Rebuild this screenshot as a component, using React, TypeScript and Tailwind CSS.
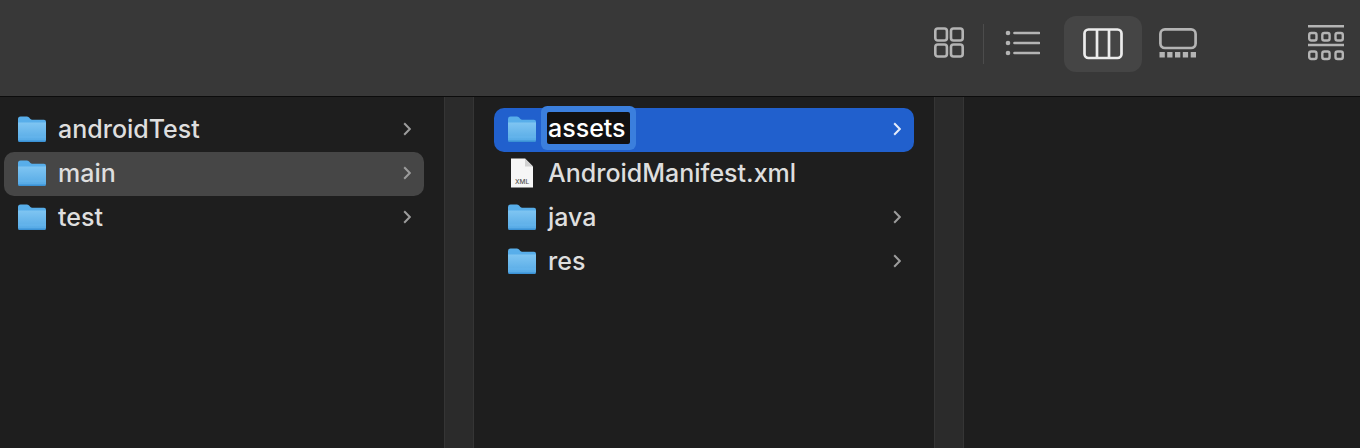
import React from 'react';

type Item = {
  name: string;
  kind: 'folder' | 'xml';
  state?: 'selected' | 'inactive' | 'rename';
};

const firstColumn: Item[] = [
  { name: 'androidTest', kind: 'folder' },
  { name: 'main', kind: 'folder', state: 'inactive' },
  { name: 'test', kind: 'folder' },
];

const secondColumn: Item[] = [
  { name: 'assets', kind: 'folder', state: 'rename' },
  { name: 'AndroidManifest.xml', kind: 'xml' },
  { name: 'java', kind: 'folder' },
  { name: 'res', kind: 'folder' },
];

const FolderIcon = ({ id }: { id: string }) => (
  <svg width="28" height="26" viewBox="0 0 28 26" className="mb-[2px] shrink-0">
    <defs>
      <linearGradient id={id} x1="0" y1="0" x2="0" y2="1">
        <stop offset="0" stopColor="#7fc5f2" />
        <stop offset="1" stopColor="#53a8e5" />
      </linearGradient>
    </defs>
    <path d="M0 3a2.5 2.5 0 0 1 2.5-2.5h6.2c1 0 1.7.4 2.4 1.1l1.3 1.4c.5.5 1 .7 1.7.7H26a2 2 0 0 1 2 2V10H0z" fill="#58aeea" />
    <path d="M0 6.5h28V24a2 2 0 0 1-2 2H2a2 2 0 0 1-2-2z" fill={`url(#${id})`} />
    <rect x="0" y="20.5" width="28" height="1" fill="#66b6ee" />
    <path d="M0 24.5h28V24a2 2 0 0 1-2 2H2a2 2 0 0 1-2-2z" fill="#3b92d5" />
  </svg>
);

const XmlIcon = () => (
  <svg width="28" height="30" viewBox="0 0 28 30" className="mb-[2px] shrink-0">
    <path d="M3 0.5H17L25 8.5V29.5H3z" fill="#f6f6f6" />
    <path d="M17 0.5V8.5H25z" fill="#d2d2d2" />
    <text x="14" y="26" textAnchor="middle" fontSize="6.5" fontWeight="500" fill="#555" fontFamily="Inter, sans-serif">
      XML
    </text>
  </svg>
);

const Chevron = ({ color }: { color: string }) => (
  <svg width="8" height="14" viewBox="0 0 8 14" fill="none" stroke={color} strokeWidth="2" className="mb-[2px] ml-auto shrink-0">
    <path d="M1.2 1.2 6.8 7 1.2 12.8" />
  </svg>
);

const Row = ({ item, id }: { item: Item; id: string }) => {
  const rowBg =
    item.state === 'rename'
      ? 'bg-[#2160cd]'
      : item.state === 'inactive'
        ? 'bg-[#464646]'
        : '';

  return (
    <div className={`flex h-[44px] w-[420px] items-center rounded-[10px] pl-[14px] pr-[13px] ${rowBg}`}>
      <div className="flex w-[28px] justify-center">
        {item.kind === 'folder' ? <FolderIcon id={id} /> : <XmlIcon />}
      </div>
      {item.state === 'rename' ? (
        <span className="mb-[4px] ml-[11px] flex h-[32px] w-[83px] items-center rounded-[2px] bg-[#111] pl-[1px] text-white ring-[6px] ring-[#3b7fdd]">
          {item.name}
        </span>
      ) : (
        <span className="mb-[1px] ml-[12px] text-[#dedede]">{item.name}</span>
      )}
      {item.kind === 'folder' && (
        <Chevron color={item.state === 'rename' ? '#e6ecfa' : '#9c9c9c'} />
      )}
    </div>
  );
};

const Gutter = () => (
  <div className="w-[30px] shrink-0 border-x border-[#353535] bg-[#2b2b2b]" />
);

export default function App() {
  return (
    <div className="flex h-[448px] w-[1360px] flex-col overflow-hidden bg-[#1e1e1e] font-['Inter','Liberation_Sans',sans-serif] text-[25px] font-[450] leading-none">
      {/* toolbar */}
      <header className="flex h-[97px] shrink-0 items-start border-b border-[#0c0c0c] bg-[#383838] pl-[934px] pt-[16px]">
        <svg width="30" height="56" viewBox="0 0 30 56" fill="none" stroke="#b4b4b4" strokeWidth="2.6">
          <rect x="1.3" y="12.5" width="11.6" height="12" rx="2.5" />
          <rect x="17" y="12.5" width="11.7" height="12" rx="2.5" />
          <rect x="1.3" y="28.5" width="11.6" height="12" rx="2.5" />
          <rect x="17" y="28.5" width="11.7" height="12" rx="2.5" />
        </svg>
        <div className="ml-[19px] mt-[8px] h-[40px] w-[1px] bg-[#4c4c4c]" />
        <svg width="36" height="56" viewBox="0 0 36 56" className="ml-[20px]" fill="#b4b4b4" stroke="none">
          <circle cx="4" cy="17" r="2.3" />
          <circle cx="4" cy="27" r="2.3" />
          <circle cx="4" cy="37" r="2.3" />
          <path d="M10.5 17H35M10.5 27H35M10.5 37H35" stroke="#b4b4b4" strokeWidth="2.7" strokeLinecap="round" />
        </svg>
        <div className="ml-[24px] flex h-[56px] w-[78px] items-center justify-center rounded-[12px] bg-[#454545]">
          <svg width="40" height="32" viewBox="0 0 40 32" fill="none" stroke="#ececec" strokeWidth="2.7">
            <rect x="1.5" y="1.5" width="37" height="28.5" rx="4" />
            <path d="M14 1.5V30M26 1.5V30" />
          </svg>
        </div>
        <svg width="38" height="56" viewBox="0 0 38 56" className="ml-[17px]" fill="none" stroke="#b4b4b4" strokeWidth="2.7">
          <rect x="1.4" y="13.4" width="35.2" height="18.6" rx="4.5" />
          <g fill="#b4b4b4" stroke="none">
            <rect x="0.5" y="36" width="5.3" height="5.5" />
            <rect x="8.2" y="36" width="5.3" height="5.5" />
            <rect x="16" y="36" width="5.3" height="5.5" />
            <rect x="23.8" y="36" width="5.3" height="5.5" />
            <rect x="31.7" y="36" width="5.3" height="5.5" />
          </g>
        </svg>
        <svg width="36" height="56" viewBox="0 0 36 56" className="ml-[111px]" fill="none" stroke="#b4b4b4" strokeWidth="2.4">
          <path d="M0 10.3H36M0 29H36" strokeWidth="2.6" />
          <rect x="1.2" y="17" width="7.3" height="7.5" rx="2" />
          <rect x="14.3" y="17" width="7.3" height="7.5" rx="2" />
          <rect x="27.5" y="17" width="7.3" height="7.5" rx="2" />
          <rect x="1.2" y="35.5" width="7.3" height="7.5" rx="2" />
          <rect x="14.3" y="35.5" width="7.3" height="7.5" rx="2" />
          <rect x="27.5" y="35.5" width="7.3" height="7.5" rx="2" />
        </svg>
      </header>

      {/* columns */}
      <main className="flex min-h-0 flex-1">
        <section className="w-[444px] shrink-0 pl-[4px] pt-[11px]">
          {firstColumn.map((item) => (
            <Row key={item.name} item={item} id={`a-${item.name}`} />
          ))}
        </section>
        <Gutter />
        <section className="w-[460px] shrink-0 pl-[20px] pt-[11px]">
          {secondColumn.map((item) => (
            <Row key={item.name} item={item} id={`b-${item.name}`} />
          ))}
        </section>
        <Gutter />
        <section className="flex-1" />
      </main>
    </div>
  );
}
